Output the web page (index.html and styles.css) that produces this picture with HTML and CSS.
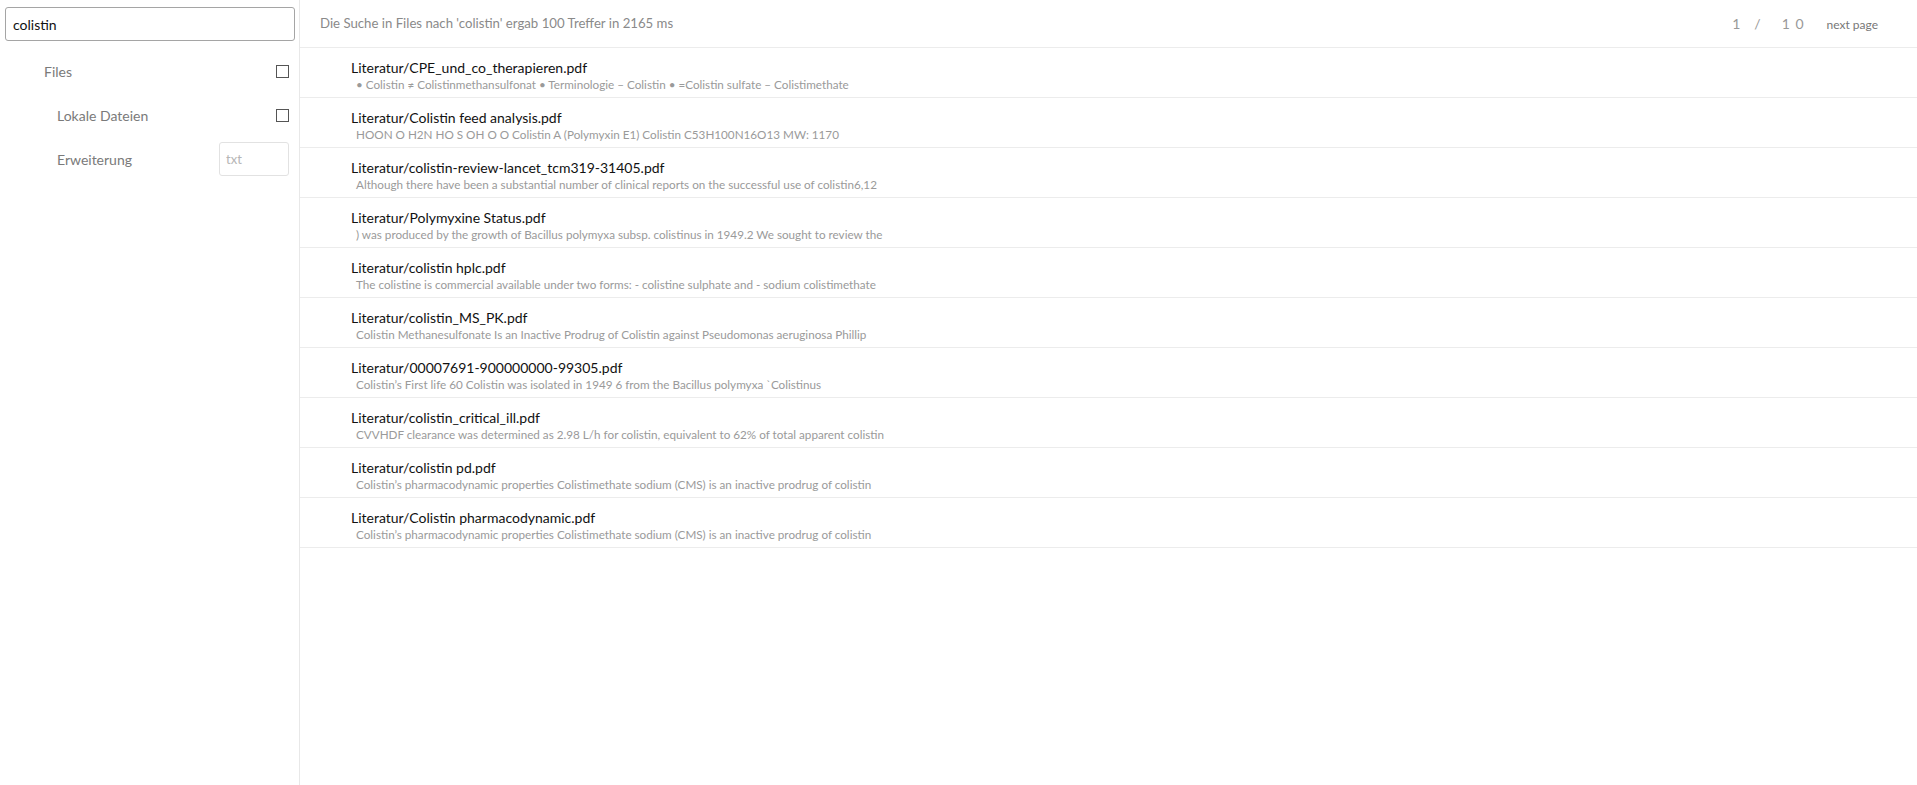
FILE: index.html
```html
<!DOCTYPE html>
<html>
<head>
  <meta charset="UTF-8">
  <title>Suche</title>
  <link rel="stylesheet" href="styles.css">
</head>
<body>
  <div class="sidebar">
    <input class="search" type="text" value="colistin">

    <div class="filter">
      <span class="filter-label">Files</span>
      <span class="checkbox"></span>
    </div>
    <div class="filter sub">
      <span class="filter-label">Lokale Dateien</span>
      <span class="checkbox"></span>
    </div>
    <div class="filter sub">
      <span class="filter-label">Erweiterung</span>
      <input class="ext" type="text" placeholder="txt">
    </div>
  </div>

  <div class="main">
    <div class="header">
      <div class="summary">Die Suche in Files nach 'colistin' ergab 100 Treffer in 2165 ms</div>
      <div class="pager">
        <span class="page-current">1</span>
        <span class="page-sep">/</span>
        <span class="page-total">1 0</span>
        <span class="next">next page</span>
      </div>
    </div>

    <div class="results">
      <div class="result">
        <div class="result-title">Literatur/CPE_und_co_therapieren.pdf</div>
        <div class="result-snippet">• Colistin ≠ Colistinmethansulfonat • Terminologie – Colistin • =Colistin sulfate – Colistimethate</div>
      </div>
      <div class="result">
        <div class="result-title">Literatur/Colistin feed analysis.pdf</div>
        <div class="result-snippet">HOON O H2N HO S OH O O Colistin A (Polymyxin E1) Colistin C53H100N16O13 MW: 1170</div>
      </div>
      <div class="result">
        <div class="result-title">Literatur/colistin-review-lancet_tcm319-31405.pdf</div>
        <div class="result-snippet">Although there have been a substantial number of clinical reports on the successful use of colistin6,12</div>
      </div>
      <div class="result">
        <div class="result-title">Literatur/Polymyxine Status.pdf</div>
        <div class="result-snippet">) was produced by the growth of Bacillus polymyxa subsp. colistinus in 1949.2 We sought to review the</div>
      </div>
      <div class="result">
        <div class="result-title">Literatur/colistin hplc.pdf</div>
        <div class="result-snippet">The colistine is commercial available under two forms: - colistine sulphate and - sodium colistimethate</div>
      </div>
      <div class="result">
        <div class="result-title">Literatur/colistin_MS_PK.pdf</div>
        <div class="result-snippet">Colistin Methanesulfonate Is an Inactive Prodrug of Colistin against Pseudomonas aeruginosa Phillip</div>
      </div>
      <div class="result">
        <div class="result-title">Literatur/00007691-900000000-99305.pdf</div>
        <div class="result-snippet">Colistin’s First life 60 Colistin was isolated in 1949 6 from the Bacillus polymyxa `Colistinus</div>
      </div>
      <div class="result">
        <div class="result-title">Literatur/colistin_critical_ill.pdf</div>
        <div class="result-snippet">CVVHDF clearance was determined as 2.98 L/h for colistin, equivalent to 62% of total apparent colistin</div>
      </div>
      <div class="result">
        <div class="result-title">Literatur/colistin pd.pdf</div>
        <div class="result-snippet">Colistin’s pharmacodynamic properties Colistimethate sodium (CMS) is an inactive prodrug of colistin</div>
      </div>
      <div class="result">
        <div class="result-title">Literatur/Colistin pharmacodynamic.pdf</div>
        <div class="result-snippet">Colistin’s pharmacodynamic properties Colistimethate sodium (CMS) is an inactive prodrug of colistin</div>
      </div>
    </div>
  </div>
</body>
</html>
```

FILE: styles.css
```css
* {
  margin: 0;
  padding: 0;
  box-sizing: border-box;
}

html, body {
  height: 100%;
}

body {
  display: flex;
  font-family: "Segoe UI", Lato, sans-serif;
  color: #111;
  background: #fff;
}

/* Sidebar */
.sidebar {
  width: 300px;
  flex-shrink: 0;
  border-right: 1px solid #e8e8e8;
  padding: 7px 10px 0 5px;
}

.search {
  display: block;
  width: 290px;
  height: 34px;
  border: 1px solid #a5a5a5;
  border-radius: 3px;
  padding: 0 7px;
  font-family: inherit;
  font-size: 14px;
  color: #111;
  outline: none;
}

.filter {
  display: flex;
  align-items: center;
  justify-content: space-between;
  height: 44px;
  padding-left: 39px;
}

.filter:first-of-type {
  margin-top: 8px;
}

.filter.sub {
  padding-left: 52px;
}

.filter-label {
  font-size: 14px;
  color: #7a7a7a;
}

.checkbox {
  width: 13px;
  height: 13px;
  border: 1px solid #555;
}

.ext {
  width: 70px;
  height: 34px;
  border: 1px solid #e2e2e2;
  border-radius: 3px;
  padding: 0 6px;
  font-family: inherit;
  font-size: 13px;
  outline: none;
}

.ext::placeholder {
  color: #b5b5b5;
}

/* Main */
.main {
  flex: 1;
}

.header {
  height: 48px;
  display: flex;
  align-items: center;
  justify-content: space-between;
  padding: 0 39px 1px 20px;
  border-bottom: 1px solid #ececec;
}

.summary {
  font-size: 13.2px;
  color: #8a8a8a;
}

.pager {
  display: flex;
  align-items: baseline;
  color: #999;
  font-size: 14px;
}

.page-current {
  margin-left: 3px;
}

.page-sep {
  margin-left: 14px;
}

.page-total {
  margin-left: 21px;
  letter-spacing: 1px;
}

.next {
  margin-left: 22px;
  font-size: 12px;
  color: #777;
}

.result {
  height: 50px;
  border-bottom: 1px solid #ececec;
  padding: 10px 0 0 51px;
}

.result-title {
  font-size: 14px;
  line-height: 19px;
  color: #111;
}

.result-snippet {
  font-size: 11.7px;
  line-height: 15px;
  color: #9a9a9a;
  padding-left: 5px;
}
```
